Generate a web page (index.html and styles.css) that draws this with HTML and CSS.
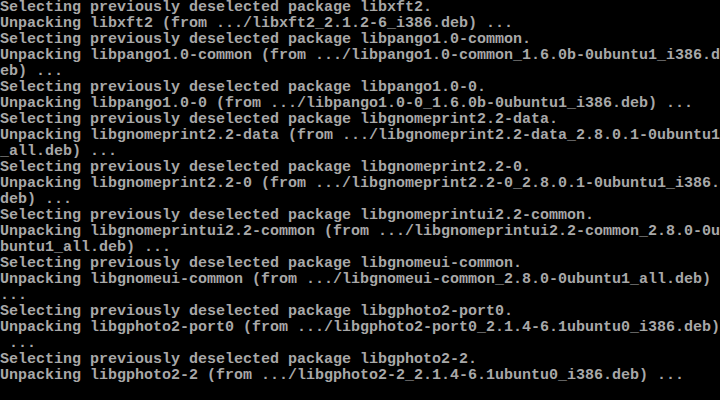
FILE: index.html
```html
<!DOCTYPE html>
<html>
<head>
<meta charset="utf-8">
<link rel="stylesheet" href="styles.css">
</head>
<body>
<pre class="console">Selecting previously deselected package libxft2.
Unpacking libxft2 (from .../libxft2_2.1.2-6_i386.deb) ...
Selecting previously deselected package libpango1.0-common.
Unpacking libpango1.0-common (from .../libpango1.0-common_1.6.0b-0ubuntu1_i386.d
eb) ...
Selecting previously deselected package libpango1.0-0.
Unpacking libpango1.0-0 (from .../libpango1.0-0_1.6.0b-0ubuntu1_i386.deb) ...
Selecting previously deselected package libgnomeprint2.2-data.
Unpacking libgnomeprint2.2-data (from .../libgnomeprint2.2-data_2.8.0.1-0ubuntu1
_all.deb) ...
Selecting previously deselected package libgnomeprint2.2-0.
Unpacking libgnomeprint2.2-0 (from .../libgnomeprint2.2-0_2.8.0.1-0ubuntu1_i386.
deb) ...
Selecting previously deselected package libgnomeprintui2.2-common.
Unpacking libgnomeprintui2.2-common (from .../libgnomeprintui2.2-common_2.8.0-0u
buntu1_all.deb) ...
Selecting previously deselected package libgnomeui-common.
Unpacking libgnomeui-common (from .../libgnomeui-common_2.8.0-0ubuntu1_all.deb)
...
Selecting previously deselected package libgphoto2-port0.
Unpacking libgphoto2-port0 (from .../libgphoto2-port0_2.1.4-6.1ubuntu0_i386.deb)
 ...
Selecting previously deselected package libgphoto2-2.
Unpacking libgphoto2-2 (from .../libgphoto2-2_2.1.4-6.1ubuntu0_i386.deb) ...
</pre>
</body>
</html>
```
FILE: styles.css
```css
html, body {
  margin: 0;
  padding: 0;
  background: #000;
  width: 720px;
  height: 400px;
  overflow: hidden;
}
.console {
  margin: 0;
  padding: 0;
  color: #a8a8a8;
  font-family: "Liberation Mono", "DejaVu Sans Mono", monospace;
  font-size: 15px;
  font-weight: bold;
  line-height: 16px;
  white-space: pre;
}
```
